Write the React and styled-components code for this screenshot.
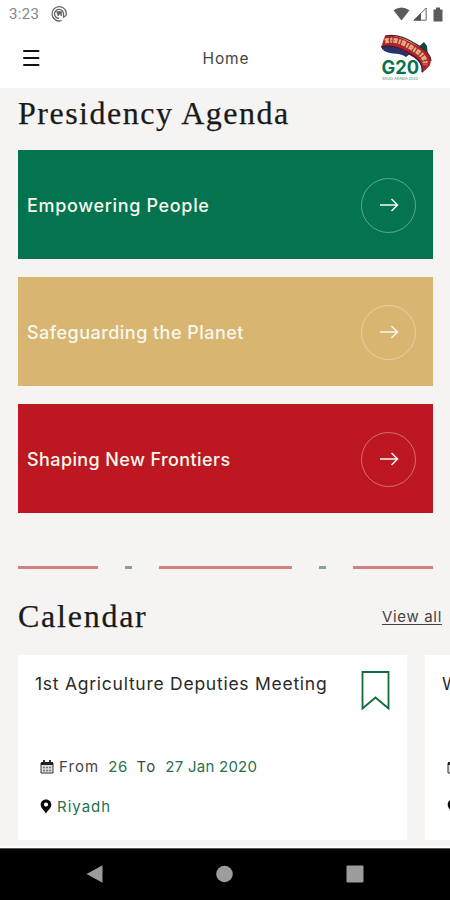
import React from "react";
import styled, { createGlobalStyle } from "styled-components";

const GlobalStyle = createGlobalStyle`
  * { box-sizing: border-box; }
  body { margin: 0; background: #f5f4f2; }
  p, h1, h2 { margin: 0; font-weight: 400; }
  svg { display: block; flex: none; }
`;

const Screen = styled.div`
  width: 450px;
  height: 900px;
  overflow: hidden;
  display: flex;
  flex-direction: column;
  background: #f5f4f2;
  font-family: Inter, "Open Sans", sans-serif;
  color: #222;
`;

const StatusBar = styled.div`
  height: 28px;
  flex: none;
  display: flex;
  align-items: center;
  padding: 0 5px 0 9px;
  background: #fff;
`;

const Time = styled.span`
  font-family: Roboto, sans-serif;
  font-size: 15px;
  letter-spacing: 0.35px;
  color: #858585;
  width: 41px;
`;

const StatusIcons = styled.div`
  margin-left: auto;
  display: flex;
  align-items: center;
  gap: 3px;
`;

const Header = styled.header`
  height: 60px;
  flex: none;
  display: grid;
  grid-template-columns: 1fr auto 1fr;
  align-items: center;
  padding: 0 17px 0 23px;
  background: #fff;
`;

const PageName = styled.p`
  margin-right: 4px;
  font-size: 15.5px;
  letter-spacing: 0.9px;
  color: #444;
`;

const LogoBox = styled.div`
  justify-self: end;
  padding-top: 2px;
`;

const Content = styled.main`
  flex: 1;
  min-height: 0;
  display: flex;
  flex-direction: column;
  padding-left: 18px;
`;

const Title = styled.h1`
  font-family: "Liberation Serif", serif;
  font-size: 32px;
  line-height: 36px;
  letter-spacing: ${(p) => p.$spacing}px;
  color: #1a1a1a;
  -webkit-text-stroke: 0.25px #1a1a1a;
  white-space: nowrap;
`;

const AgendaTitle = styled.div`
  height: 62px;
  padding-top: 7px;
  flex: none;
`;

const AgendaList = styled.div`
  display: flex;
  flex-direction: column;
  gap: 18.4px;
  padding: 0.4px 17px 0.1px 0;
`;

const AgendaCard = styled.div`
  height: 108.6px;
  display: flex;
  align-items: center;
  justify-content: space-between;
  padding: 1px 17px 0 9px;
  background: ${(p) => p.$color};
  color: #f6f8ee;
  font-size: 18px;
  font-weight: 500;
  letter-spacing: ${(p) => p.$spacing}px;
`;

const ArrowCircle = styled.div`
  width: 55px;
  height: 55px;
  border: 1px solid rgba(255, 255, 255, 0.36);
  border-radius: 50%;
  display: flex;
  align-items: center;
  justify-content: center;
`;

const Divider = styled.div`
  height: 4px;
  flex: none;
  margin: 52.5px 17px 0.5px 0;
  display: flex;
  align-items: center;
  justify-content: space-between;
`;

const Dash = styled.span`
  width: ${(p) => p.$width}px;
  height: 3px;
  background: ${(p) => (p.$small ? "#8b9f9b" : "#d28380")};
`;

const CalendarHead = styled.div`
  height: 84.5px;
  flex: none;
  display: flex;
  justify-content: space-between;
  padding: 28px 8px 0 0;
`;

const ViewAll = styled.span`
  margin-top: 9px;
  font-size: 15px;
  line-height: 20px;
  letter-spacing: 0.68px;
  color: #444;
  text-decoration: underline;
  text-underline-offset: 2px;
  text-decoration-thickness: 1px;
`;

const Events = styled.div`
  display: flex;
  gap: 18px;
  overflow: hidden;
`;

const EventCard = styled.article`
  width: 389px;
  height: 185px;
  flex: none;
  display: flex;
  flex-direction: column;
  padding: 16px 17px 0;
  background: #fff;
`;

const EventTop = styled.div`
  height: 84px;
  display: flex;
  justify-content: space-between;
`;

const EventName = styled.h2`
  font-size: 17.5px;
  line-height: 26px;
  letter-spacing: 0.74px;
  color: #2a2a2a;
  white-space: nowrap;
`;

const EventLine = styled.div`
  height: 24px;
  margin-bottom: 16px;
  padding-left: 5px;
  display: flex;
  align-items: center;
  gap: ${(p) => p.$gap}px;
  font-size: 15px;
  letter-spacing: ${(p) => p.$spacing}px;
  color: #444;
  white-space: nowrap;
`;

const Green = styled.span`
  color: #29704f;
  letter-spacing: ${(p) => p.$spacing}px;
`;

const DateText = styled.span`
  display: flex;
  gap: 9px;
`;

const NavBar = styled.nav`
  height: 54px;
  flex: none;
  display: flex;
  justify-content: space-between;
  align-items: center;
  padding: 0 86px 0 86px;
  border-top: 2px solid #fff;
  background: #000;
  box-shadow: inset 0 1px 0 #555;
`;

function G20Logo() {
  return (
    <svg width="52" height="50" viewBox="0 0 52 50">
      <path d="M35 15 43 8 46 12 47 22Z" fill="#12483c" />
      <path d="M1 12C8 10 20 13 29 20L25 23C17 17 7 22 1 15Z" fill="#27336d" />
      <path d="M4 2C17 0 27 7 37 12C47 18 52 23 49 31C46 35 42 38 41 39C43 30 36 25 27 20C18 14 10 12 0 13C2 9 2 6 4 2Z" fill="#b0232e" />
      <path d="M4 2C17 -1 28 6 38 12C46 17 50 22 50 27" fill="none" stroke="#51262e" strokeWidth="1.2" />
      <path d="M4 7C17 4 26 11 34 16C41 20 45 25 44 31" fill="none" stroke="#e7b47d" strokeWidth="5" strokeDasharray="4 1.3 2 1.2" />
      <path d="M4 7C17 4 26 11 34 16C41 20 45 25 44 31" fill="none" stroke="#b66a50" strokeWidth="1.2" strokeDasharray="1 2" />
      <path d="M0 13C14 10 25 17 34 23C39 27 42 33 41 38" fill="none" stroke="#302038" strokeWidth="1.5" />
      <text x="0.5" y="40" textLength="37.5" lengthAdjust="spacingAndGlyphs" fontFamily="Inter, sans-serif" fontWeight="700" fontSize="18.5" fill="#08734f">G20</text>
      <text x="1" y="46" textLength="36" lengthAdjust="spacingAndGlyphs" fontFamily="Inter, sans-serif" fontSize="3.6" fill="#438c73">SAUDI ARABIA 2020</text>
    </svg>
  );
}

function Arrow() {
  return (
    <svg width="20" height="16" viewBox="0 0 20 16" fill="none" stroke="#f6f8ee" strokeWidth="1.5">
      <path d="M1 8H18.5M12.5 2L18.5 8L12.5 14" />
    </svg>
  );
}

function CalendarIcon() {
  return (
    <svg width="14" height="14" viewBox="0 0 14 14">
      <path d="M1 3H13V13H1Z" fill="#ddd" stroke="#333" />
      <path d="M1 2H13V5H1Z" fill="#222" />
      <path d="M4 0V3M10 0V3" stroke="#222" strokeWidth="1.8" />
      <path d="M3 7.5H11M3 10.5H11" stroke="#777" strokeWidth="1.6" strokeDasharray="2 1" />
    </svg>
  );
}

function PinIcon() {
  return (
    <svg width="12" height="15" viewBox="0 0 12 15">
      <path fillRule="evenodd" d="M6 0.5C2.8 0.5 0.7 2.8 0.7 5.7C0.7 9 4.4 11.5 6 14.5C7.6 11.5 11.3 9 11.3 5.7C11.3 2.8 9.2 0.5 6 0.5ZM6 3.5A2.1 2.1 0 1 1 6 7.7A2.1 2.1 0 1 1 6 3.5Z" fill="#080808" />
    </svg>
  );
}

function Event({ name, from, to, city }) {
  return (
    <EventCard>
      <EventTop>
        <EventName>{name}</EventName>
        <svg width="29" height="40" viewBox="0 0 29 40">
          <path d="M1.5 1H27.5V37.5L14.5 26.5L1.5 37.5Z" fill="none" stroke="#126b38" strokeWidth="1.8" />
        </svg>
      </EventTop>
      <EventLine $gap={5} $spacing={1.1}>
        <CalendarIcon />
        {from && (
          <DateText>
            <span>From</span>
            <Green $spacing={0.4}>{from}</Green>
            <span>To</span>
            <Green $spacing={0.25}>{to}</Green>
          </DateText>
        )}
      </EventLine>
      <EventLine $gap={5}>
        <PinIcon />
        <Green $spacing={1}>{city}</Green>
      </EventLine>
    </EventCard>
  );
}

const agenda = [
  { title: "Empowering People", color: "#03744f", spacing: 0.66 },
  { title: "Safeguarding the Planet", color: "#d8b571", spacing: 0.46 },
  { title: "Shaping New Frontiers", color: "#bd1822", spacing: 0.4 },
];

const dashes = [80, 7, 133, 7, 80];

export default function App() {
  return (
    <Screen>
      <GlobalStyle />
      <StatusBar>
        <Time>3:23</Time>
        <svg width="18" height="18" viewBox="0 0 18 18" fill="none" stroke="#666">
          <path d="M11.5 15.6A7.2 7.2 0 1 1 16.2 10.5" strokeWidth="1.3" />
          <path d="M9 13.4A4.5 4.5 0 1 1 13.5 9V12L16 10.5" strokeWidth="1.3" />
          <path d="M6.5 6.5L11.5 6.5L11.5 11L9.5 9L8 11Z" fill="#666" strokeWidth="0.6" />
        </svg>
        <StatusIcons>
          <svg width="17" height="14" viewBox="0 0 17 14"><path d="M0.5 3.3Q8.5-2.5 16.5 3.3L8.5 13.5Z" fill="#5b5b5b" /></svg>
          <svg width="14" height="14" viewBox="0 0 14 14">
            <path d="M1 13.2L13.2 1V13.2Z" fill="none" stroke="#666" />
            <path d="M0.5 13.5L8 6V13.5Z" fill="#555" />
          </svg>
          <svg width="15" height="15" viewBox="0 0 15 15"><path d="M3.5 2.5H6V0.5H10V2.5H12.5V14.5H3.5Z" fill="#5b5b5b" /></svg>
        </StatusIcons>
      </StatusBar>

      <Header>
        <svg width="17" height="18" viewBox="0 0 17 18" stroke="#111" strokeWidth="2" strokeLinecap="round">
          <path d="M1 2H15.5M1 9H15.5M1 16H15.5" />
        </svg>
        <PageName>Home</PageName>
        <LogoBox><G20Logo /></LogoBox>
      </Header>

      <Content>
        <AgendaTitle><Title $spacing={1.5}>Presidency Agenda</Title></AgendaTitle>
        <AgendaList>
          {agenda.map((item) => (
            <AgendaCard key={item.title} $color={item.color} $spacing={item.spacing}>
              {item.title}
              <ArrowCircle><Arrow /></ArrowCircle>
            </AgendaCard>
          ))}
        </AgendaList>
        <Divider>
          {dashes.map((width, i) => (
            <Dash key={i} $width={width} $small={width < 10} />
          ))}
        </Divider>
        <CalendarHead>
          <Title $spacing={1.75}>Calendar</Title>
          <ViewAll>View all</ViewAll>
        </CalendarHead>
        <Events>
          <Event name="1st Agriculture Deputies Meeting" from="26" to="27 Jan 2020" city="Riyadh" />
          <Event name="W" />
        </Events>
      </Content>

      <NavBar>
        <svg width="17" height="18" viewBox="0 0 17 18"><path d="M0.5 9L16.5 0.3V17.7Z" fill="#9c9c9c" /></svg>
        <svg width="17" height="18" viewBox="0 0 17 18"><circle cx="8.5" cy="9" r="8.3" fill="#9c9c9c" /></svg>
        <svg width="18" height="18" viewBox="0 0 18 18"><rect x="0.5" y="0.5" width="17" height="17" rx="1" fill="#9c9c9c" /></svg>
      </NavBar>
    </Screen>
  );
}
